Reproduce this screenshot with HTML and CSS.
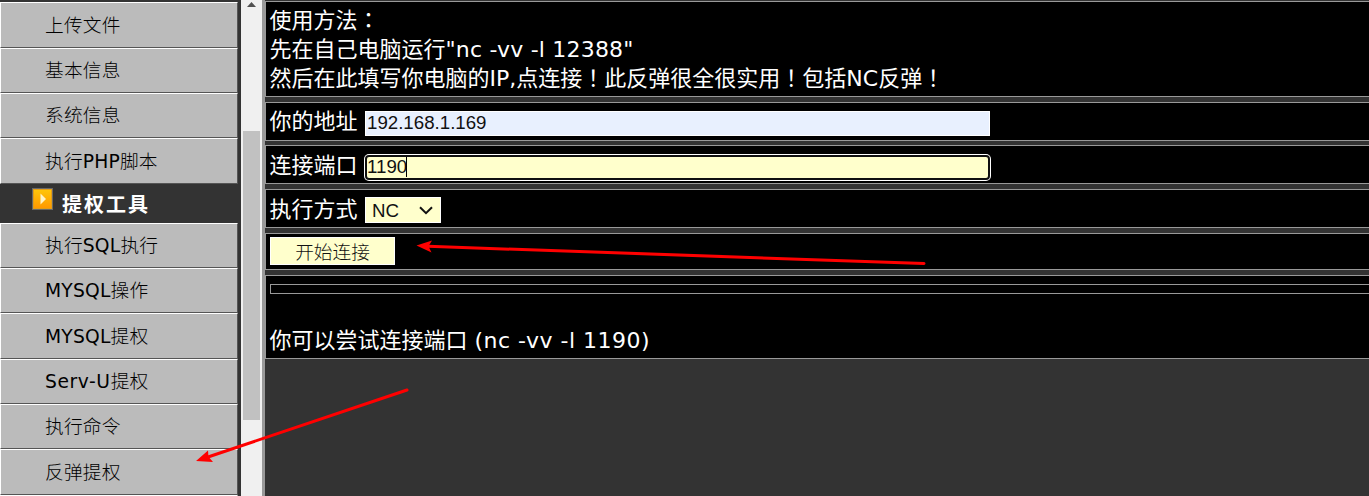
FILE: index.html
```html
<!DOCTYPE html>
<html lang="zh-CN">
<head>
<meta charset="utf-8">
<title>提权工具</title>
<link rel="stylesheet" href="styles.css">
</head>
<body>
<div class="frames">
  <nav class="menu">
    <a class="item tall">上传文件</a>
    <a class="item">基本信息</a>
    <a class="item">系统信息</a>
    <a class="item tall">执行<span class="latin">PHP</span>脚本</a>
    <div class="group">
      <svg class="group-icon" width="21" height="22" viewBox="0 0 21 22">
        <defs><linearGradient id="g" x1="0" y1="0" x2="0" y2="1"><stop offset="0" stop-color="#ffc90b"/><stop offset="1" stop-color="#ff9500"/></linearGradient></defs>
        <rect x=".5" y=".5" width="20" height="21" fill="url(#g)" stroke="#686868"/>
        <rect x="1.5" y="1.5" width="18" height="19" fill="none" stroke="#e39d16"/>
        <path d="M8.500 5.500 14 11 8.500 16.500z" fill="#fff4c8"/>
      </svg>
      <span class="group-title">提权工具</span>
    </div>
    <a class="item">执行<span class="latin">SQL</span>执行</a>
    <a class="item"><span class="latin">MYSQL</span>操作</a>
    <a class="item tall"><span class="latin">MYSQL</span>提权</a>
    <a class="item"><span class="latin wide">Serv-U</span>提权</a>
    <a class="item">执行命令</a>
    <a class="item tall">反弹提权</a>
    <a class="item"></a>
  </nav>
  <div class="scrollbar">
    <svg class="scroll-up" width="9" height="5" viewBox="0 0 9 5"><path d="M0 5 4.5 0 9 5z" fill="#505050"/></svg>
    <div class="thumb"></div>
  </div>
  <main class="content">
    <section class="panel usage">
      <p>使用方法<span class="mark" lang="zh-TW">：</span></p>
      <p>先在自己电脑运行<span class="latin command">"nc -vv -l 12388"</span></p>
      <p>然后在此填写你电脑的<span class="latin">IP,</span>点连接<span class="mark" lang="zh-TW">！</span>此反弹很全很实用<span class="mark" lang="zh-TW">！</span>包括<span class="latin">NC</span>反弹<span class="mark" lang="zh-TW">！</span></p>
    </section>
    <section class="panel address"><label>你的地址</label><div class="field filled">192.168.1.169</div></section>
    <section class="panel port"><label>连接端口</label><div class="field focused">1190<i class="caret"></i></div></section>
    <section class="panel mode"><label>执行方式</label>
      <div class="select">NC<svg width="14" height="9" viewBox="0 0 14 9"><path d="M1 1.2 7 7.2 13 1.2" fill="none" stroke="#111" stroke-width="2"/></svg></div>
    </section>
    <section class="panel submit"><div class="button">开始连接</div></section>
    <section class="panel result"><div class="bar"></div><p>你可以尝试连接端口 <span class="latin attempt">(nc -vv -l 1190)</span></p></section>
  </main>
</div>
<svg class="arrows" width="1369" height="496" viewBox="0 0 1369 496">
  <g fill="#f00" stroke="#f00">
    <path d="M924 263.500 428 246.300" stroke-width="3" stroke-linecap="round"/>
    <path d="M416.500 245.500 432 240.500 428.500 246.300 431.500 252.500z" stroke="none"/>
    <path d="M407 390 208 457" stroke-width="3" stroke-linecap="round"/>
    <path d="M196 461 208 450.500 208.500 456.800 213 462z" stroke="none"/>
  </g>
</svg>
</body>
</html>
```
FILE: styles.css
```css
* { box-sizing: border-box; }
body { margin: 0; background: #333; overflow: hidden; font-family: "DejaVu Sans", "Noto Sans CJK SC", sans-serif; }
p { margin: 0; height: 29px; }
.frames { display: flex; height: 496px; overflow: hidden; }

.menu { width: 241px; flex: none; padding: 2px 3px 0 0; font-family: "Noto Sans CJK SC", sans-serif; font-size: 18.700px; font-weight: 300; letter-spacing: .2px; color: #000; }
.item { display: block; height: 45px; line-height: 40px; padding-left: 44px; background: #bbb; border: 1px solid; border-color: #fff #555 #555 #fff; white-space: nowrap; }
.tall { height: 46px; line-height: 41px; }
.latin { font-family: "DejaVu Sans", sans-serif; font-weight: 400; }
.menu .latin { font-size: 18.700px; letter-spacing: .2px; }
.menu .wide { letter-spacing: .6px; }
.group { height: 39px; display: flex; padding-left: 32px; }
.group-icon { margin-top: 4px; }
.group-title { margin-left: 9px; line-height: 39px; font-size: 20px; font-weight: 700; letter-spacing: 2px; color: #fff; }

.scrollbar { width: 24px; flex: none; background: #f0f0f0; border-right: 3px solid #999; padding: 2px 2px 0; display: flex; flex-direction: column; }
.scroll-up { margin-left: 4px; flex: none; }
.thumb { margin-top: 124px; width: 17px; height: 289px; background: #c1c1c1; }

.content { flex: 1; min-width: 0; padding-top: 1px; font-size: 22px; line-height: 29px; color: #fff; white-space: nowrap; }
.panel { background: #000; border: 1px solid #999; border-right: 0; padding-left: 4px; display: flex; }
.panel label { width: 95.500px; margin-left: -.5px; flex: none; }
.panel p { margin-left: -.5px; }
.mark { font-family: "Noto Sans CJK TC", sans-serif; line-height: 1; }
.usage { height: 96px; margin-bottom: 5px; padding-top: 4px; display: block; }
.address { height: 39px; margin-bottom: 4px; padding-top: 4px; }
.port { height: 39px; margin-bottom: 5px; padding-top: 5px; }
.mode { height: 39px; margin-bottom: 5px; padding-top: 5px; }
.submit { height: 37px; margin-bottom: 5px; padding-top: 3px; }
.result { height: 84px; padding-top: 8px; display: block; }
.command { letter-spacing: .2px; }
.attempt { letter-spacing: .5px; }

.field { width: 625px; height: 25px; margin-top: 4px; font-family: "Liberation Sans", sans-serif; font-size: 18.700px; color: #111; }
.filled { background: #e8f0fe; border: 1px solid #fff; padding-left: 1px; line-height: 22px; }
.focused { background: #ffc; border: 2px solid #101010; border-radius: 4px; box-shadow: 0 0 0 1px #fff; line-height: 19px; }
.caret { display: inline-block; width: 1px; height: 20px; margin-left: -1px; background: #000; vertical-align: -4px; }
.select { display: flex; justify-content: space-between; align-items: center; width: 76px; height: 26px; margin-top: 2px; padding: 0 7px 0 6px; background: #ffc; border: 1px solid #fff; font-family: "Liberation Sans", sans-serif; font-size: 18.700px; color: #111; }
.button { width: 125px; height: 28px; line-height: 25px; background: #ffc; border: 1px solid #fff; text-align: center; color: #111; font-family: "Noto Sans CJK SC", sans-serif; font-size: 18.700px; font-weight: 300; }
.bar { height: 10px; border: 1px solid #999; border-right: 0; margin-bottom: 32px; }
.arrows { position: absolute; left: 0; top: 0; }
```
